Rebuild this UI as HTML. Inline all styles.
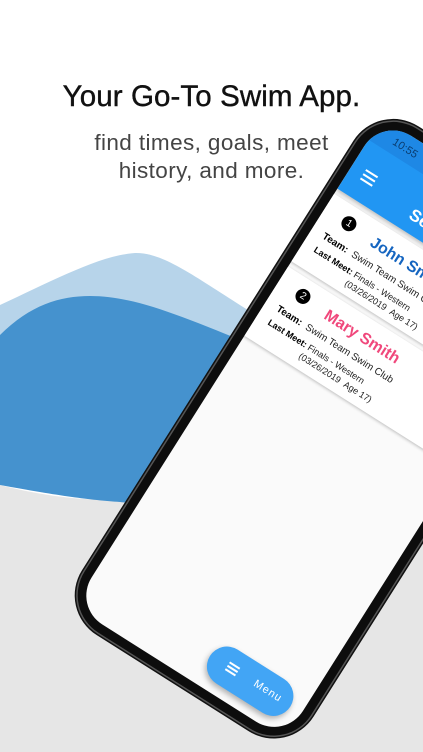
<!DOCTYPE html>
<html><head><meta charset="utf-8"><style>
*{margin:0;padding:0;box-sizing:border-box}
body{width:423px;height:752px;overflow:hidden;position:relative;background:#fff;font-family:"Liberation Sans",sans-serif}
svg.bg{position:absolute;left:0;top:0}
h1{position:absolute;top:80px;left:0;width:423px;text-align:center;font-size:29.5px;font-weight:normal;-webkit-text-stroke:0.4px #111;color:#111;letter-spacing:0.1px}
.sub{position:absolute;top:129px;left:0;width:423px;text-align:center;font-size:22.5px;color:#444;line-height:28px;letter-spacing:0.4px}
.phone{position:absolute;left:61px;top:13px;width:268px;height:596px;transform-origin:0 100%;transform:rotate(32.3deg);background:#0d0d0d;border-radius:44px;box-shadow:0 0 0 1.5px #555,0 0 0 3px #111}
.screen{position:absolute;left:9px;top:9px;right:9px;bottom:9px;border-radius:34px;background:#fafafa;overflow:hidden}
.bar{position:absolute;left:0;top:0;width:100%;height:84px;background:#2196f3;box-shadow:0 2px 4px rgba(0,0,0,.25)}
.status{position:absolute;left:0;top:0;width:100%;height:26px;background:#1e88e5}
.time{position:absolute;left:22px;top:8px;color:#0b3d70;font-size:11px}
.ham{position:absolute;left:14px;top:52px;width:14px}
.ham i{display:block;height:2px;background:#fff;margin-bottom:3px}
.title{position:absolute;left:75px;top:56px;color:#fff;font-size:17px;font-weight:bold}
.card{position:absolute;left:-3px;width:280px;background:#fff;border-radius:4px;box-shadow:0 1px 3px rgba(0,0,0,.25)}
.num{position:absolute;left:24px;top:10px;width:15px;height:15px;border-radius:50%;background:#000;color:#fff;font-size:10px;text-align:center;line-height:15px}
.name{position:absolute;left:60px;top:12px;font-size:16px;font-weight:bold}
.l{position:absolute;left:16px;font-size:10px;color:#222;white-space:nowrap}
.l b{color:#000}
.fab{position:absolute;left:142px;top:527px;width:95px;height:40px;border-radius:20px;background:#42a5f5;box-shadow:0 3px 6px rgba(0,0,0,.3);color:#fff;font-size:11px;letter-spacing:1px}
.fab .ham{left:20px;top:14px;width:12px}
.fab .ham i{height:1.5px;margin-bottom:2.5px}
</style></head><body>
<svg class="bg" width="423" height="752">
<path d="M0,485 C60,500 120,508 240,488 L423,440 L423,752 L0,752 Z" fill="#e6e6e6"/>
<path d="M0,305 C50,282 100,255 135,253 C170,252 210,290 290,335 L290,480 L0,480 Z" fill="#b7d4ea"/>
<path d="M0,335 C30,305 60,296 90,296 C140,296 190,320 290,360 L290,480 C200,500 140,505 120,502 C90,500 60,496 0,485 Z" fill="#4592ce"/>
</svg>
<h1>Your Go-To Swim App.</h1>
<div class="sub">find times, goals, meet<br>history, and more.</div>
<div class="phone"><div class="screen">
<div class="bar"><div class="status"><span class="time">10:55</span></div>
<div class="ham"><i></i><i></i><i></i></div>
<div class="title">Select Swimmer</div></div>
<div class="card" style="top:90px;height:80px">
<div class="num">1</div><div class="name" style="color:#1565c0">John Smith</div>
<div class="l" style="top:36px"><b>Team:</b>&nbsp; Swim Team Swim Club</div>
<div class="l" style="top:52px;font-size:9px"><b>Last Meet:</b> Finals - Western</div>
<div class="l" style="top:64px;left:60px;font-size:9px">(03/26/2019 &nbsp;Age 17)</div>
</div>
<div class="card" style="top:176px;height:82px">
<div class="num">2</div><div class="name" style="color:#f0487c">Mary Smith</div>
<div class="l" style="top:36px"><b>Team:</b>&nbsp; Swim Team Swim Club</div>
<div class="l" style="top:52px;font-size:9px"><b>Last Meet:</b> Finals - Western</div>
<div class="l" style="top:64px;left:60px;font-size:9px">(03/26/2019 &nbsp;Age 17)</div>
</div>
<div class="fab"><div class="ham"><i></i><i></i><i></i></div><span style="position:absolute;left:52px;top:13px">Menu</span></div>
</div></div>
</body></html>
